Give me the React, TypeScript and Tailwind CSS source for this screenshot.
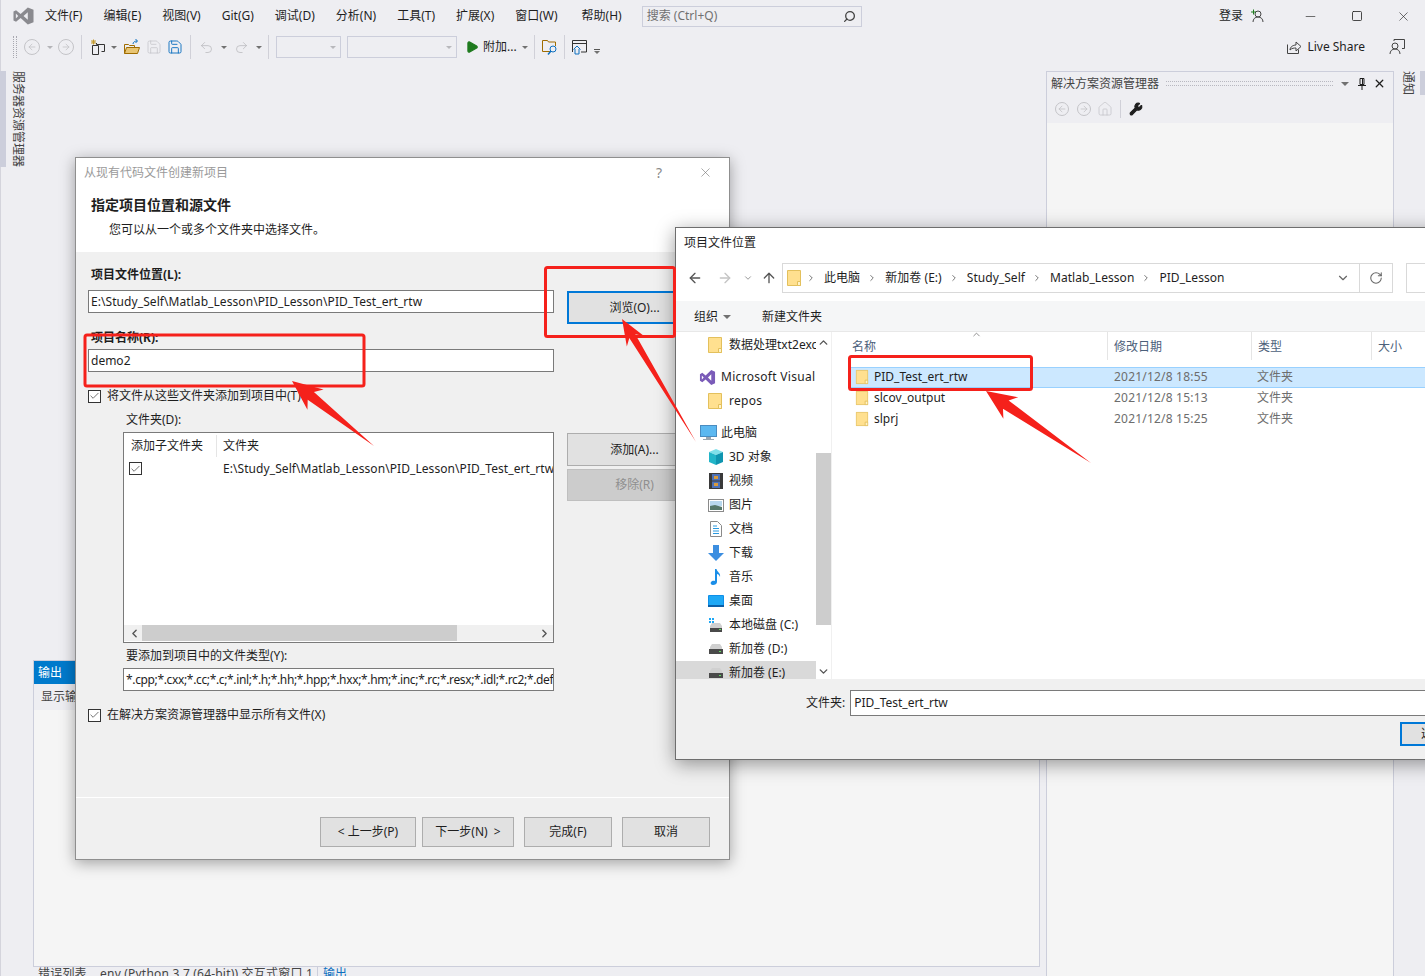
import type { ReactNode } from "react"
import {
  ArrowLeft,
  ArrowRight,
  ArrowUp,
  Check,
  ChevronDown,
  ChevronLeft,
  ChevronRight,
  ChevronUp,
  Home,
  Minus,
  Play,
  RotateCw,
  Save,
  Search,
  Square,
  Undo2,
  Redo2,
  Wrench,
  X,
} from "lucide-react"

const menus = ["文件(F)", "编辑(E)", "视图(V)", "Git(G)", "调试(D)", "分析(N)", "工具(T)", "扩展(X)", "窗口(W)", "帮助(H)"]

function Caret({ className = "" }: { className?: string }) {
  return <span className={`block h-0 w-0 border-x-[3px] border-t-[3px] border-x-transparent border-t-[#717171] ${className}`} />
}

function Divider({ className = "" }: { className?: string }) {
  return <span className={`block h-[24px] w-px bg-[#d0d0d8] ${className}`} />
}

function VsLogo() {
  return (
    <svg viewBox="0 0 22 18" className="h-[18px] w-[21px]" fill="#8a8a8f" fillRule="evenodd">
      <path d="M15.5 0 21.5 2.4V15.6L15.5 18 8 11.2 3.2 15 .5 13.6V4.4L3.2 3 8 6.8ZM15.5 5 11 9l4.5 4ZM3 6.5v5L5.5 9Z" />
    </svg>
  )
}

function CircleArrow({ dir, size = 16 }: { dir: "l" | "r"; size?: number }) {
  return (
    <span className="flex items-center justify-center rounded-full border border-[#c4c4c8] text-[#c4c4c8]" style={{ width: size, height: size }}>
      {dir === "l" ? <ArrowLeft size={10} /> : <ArrowRight size={10} />}
    </span>
  )
}

function Toolbar() {
  return (
    <div className="flex h-[30px] items-center pl-[13px]">
      <span className="h-[22px] w-[4px] border-x border-dotted border-[#a8a8b0]" />
      <span className="ml-[7px]"><CircleArrow dir="l" /></span>
      <Caret className="ml-[7px] border-t-[#b4b4b8]" />
      <span className="ml-[5px]"><CircleArrow dir="r" /></span>
      <Divider className="ml-[7px]" />
      <svg viewBox="0 0 16 16" className="ml-[8px] h-[16px] w-[16px]" fill="none">
        <path d="M6.5 5.5h8v7h-3M2.5 6.5h6v9h-6zM6.5 5.5V4" stroke="#333" />
        <path d="M3.5 0.5v5M1 3h5M1.5 1l4 4M5.5 1l-4 4" stroke="#c49a2c" />
      </svg>
      <Caret className="ml-[5px] border-t-[#444]" />
      <svg viewBox="0 0 16 16" className="ml-[7px] h-[16px] w-[16px]" fill="none">
        <path d="M.5 14.5v-9h4l1 1h5v2" stroke="#a06c00" />
        <path d="M.5 14.5l2-6h13l-2 6z" fill="#e8c574" stroke="#a06c00" />
        <path d="M9 5c0-2 2-3 4-3M11.5 0l2 2-2 2" stroke="#0e70c0" />
      </svg>
      <Save size={16} strokeWidth={1} className="ml-[6px] text-[#c0c0c4]" />
      <Save size={16} strokeWidth={1.4} className="ml-[5px] text-[#0e70c0]" />
      <Divider className="ml-[7px]" />
      <Undo2 size={15} strokeWidth={1.2} className="ml-[8px] text-[#b8b8bc]" />
      <Caret className="ml-[7px]" />
      <Redo2 size={15} strokeWidth={1.2} className="ml-[7px] text-[#b8b8bc]" />
      <Caret className="ml-[7px]" />
      <Divider className="ml-[6px]" />
      <span className="ml-[7px] flex h-[22px] w-[65px] items-center justify-end border border-[#cccedb] pr-[4px]"><Caret className="border-t-[#b8b8bc]" /></span>
      <span className="ml-[6px] flex h-[22px] w-[110px] items-center justify-end border border-[#cccedb] pr-[4px]"><Caret className="border-t-[#b8b8bc]" /></span>
      <Play size={14} className="ml-[8px] fill-[#1e7a1e] text-[#1e7a1e]" />
      <span className="ml-[4px] w-[36px] whitespace-nowrap text-[12px] text-[#1e1e1e]">附加...</span>
      <Caret className="ml-[3px] border-t-[#444]" />
      <Divider className="ml-[6px]" />
      <svg viewBox="0 0 16 16" className="ml-[7px] h-[16px] w-[16px]" fill="none">
        <path d="M.5 12.5v-11h5l1 1.500h7v4" stroke="#a06c00" />
        <path d="M.5 12.5H8" stroke="#a06c00" />
        <circle cx="11" cy="10" r="3" stroke="#0e70c0" />
        <path d="M9 12l-3 3.500" stroke="#0e70c0" strokeWidth="1.500" />
      </svg>
      <Divider className="ml-[6px]" />
      <svg viewBox="0 0 16 16" className="ml-[7px] h-[16px] w-[16px]" fill="none">
        <path d="M.5 13V1.500h14V13H9M.5 4.500h14" stroke="#333" />
        <path d="M1.500 10.500 5 7l3.500 3.500M3 10v5h4v-5" stroke="#0e70c0" />
      </svg>
      <span className="ml-[6px] mt-[8px] flex flex-col items-center gap-[1px]">
        <span className="block h-px w-[6px] bg-[#555]" />
        <Caret className="border-t-[#555]" />
      </span>
    </div>
  )
}

function TopBar() {
  return (
    <div className="flex h-[32px] items-center text-[12px] text-[#1e1e1e]">
      <span className="ml-[13px]"><VsLogo /></span>
      <nav className="ml-[11px] flex gap-[21px]">
        {menus.map((m) => (
          <span key={m} className="last:ml-[3px]">{m}</span>
        ))}
      </nav>
      <div className="ml-[20px] flex h-[21px] w-[220px] items-center justify-between border border-[#cccedb] pl-[4px] pr-[5px] text-[#717171]">
        搜索 (Ctrl+Q)
        <Search size={13} strokeWidth={2.4} className="-scale-x-100 text-[#424242]" />
      </div>
      <span className="ml-auto">登录</span>
      <svg viewBox="0 0 14 14" className="ml-[7px] h-[14px] w-[14px]" fill="none">
        <circle cx="8" cy="5" r="3" stroke="#444" />
        <path d="M3 13c0-3 2-5 5-5s5 2 5 5" stroke="#444" />
        <path d="M1 3h5M3.500 .5v5" stroke="#1e7a1e" />
      </svg>
      <Minus size={15} strokeWidth={1} className="ml-[39px] text-[#1e1e1e]" />
      <Square size={12} strokeWidth={1.6} className="ml-[33px] text-[#1e1e1e]" />
      <X size={15} strokeWidth={1} className="ml-[33px] mr-[14px] text-[#1e1e1e]" />
    </div>
  )
}

function SolutionPanel() {
  return (
    <section className="flex h-full w-[348px] flex-col border-x border-t border-[#cccedb]">
      <div className="flex h-[23px] items-center pl-[4px] text-[12px] text-[#444]">
        解决方案资源管理器
        <span className="ml-[7px] h-[5px] w-[167px] border-y border-dotted border-[#b8b8c0]" />
        <Caret className="ml-[8px] border-x-[4px] border-t-[4px] border-t-[#1e1e1e]" />
        <svg viewBox="0 0 12 12" className="ml-[7px] h-[12px] w-[12px]" fill="none" stroke="#1e1e1e">
          <path d="M4 .5h4v6H4zM6.500 1v5M2 7.500h8M6 8v4" />
        </svg>
        <X size={13} strokeWidth={2.4} className="ml-[5px] text-[#1e1e1e]" />
      </div>
      <div className="flex h-[28px] items-center pb-px pl-[8px]">
        <CircleArrow dir="l" size={14} />
        <span className="ml-[8px]"><CircleArrow dir="r" size={14} /></span>
        <Home size={16} strokeWidth={1} className="ml-[6px] text-[#c0c0c4]" />
        <span className="ml-[7px] h-[18px] w-px bg-[#d0d0d8]" />
        <Wrench size={14} className="ml-[8px] fill-[#1e1e1e] text-[#1e1e1e]" />
      </div>
      <div className="flex-1 bg-[#f5f5f5]" />
    </section>
  )
}

function OutputPanel() {
  return (
    <>
      <section className="flex h-[307px] flex-col border border-[#cccedb] bg-[#f5f5f5]">
        <div className="flex h-[23px] items-center bg-[#007acc] pl-[4px] text-[12px] text-white">输出</div>
        <div className="flex h-[26px] items-center bg-[#eeeef2] pl-[7px] text-[12px] text-[#444]">显示输出来源(S):</div>
      </section>
      <div className="flex h-[9px] overflow-hidden text-[12px] leading-[14px] text-[#444]">
        <span className="w-[285px] whitespace-nowrap border-r border-[#cccedb] pl-[5px] tracking-[0.2px]">错误列表 &nbsp;&nbsp; env (Python 3.7 (64-bit)) 交互式窗口 1</span>
        <span className="ml-[5px] text-[#0e70c0]">输出</span>
      </div>
    </>
  )
}

function Checkbox() {
  return (
    <span className="flex h-[13px] w-[13px] shrink-0 items-center justify-center border border-[#333] bg-white">
      <Check size={12} strokeWidth={1.5} className="text-[#333]" />
    </span>
  )
}

function WizButton({ w, children, className = "" }: { w: string; children: ReactNode; className?: string }) {
  return <button className={`flex h-[30px] items-center justify-center border border-[#adadad] bg-[#e1e1e1] text-[12px] text-[#1e1e1e] ${w} ${className}`}>{children}</button>
}

function WizardDialog() {
  return (
    <div className="absolute left-[75px] top-[157px] flex h-[703px] w-[655px] flex-col border border-[#8f8f8f] bg-[#f0f0f0] text-[12px] text-[#1e1e1e] shadow-[0_3px_14px_rgba(0,0,0,0.35)]">
      <header className="h-[94px] bg-white">
        <div className="flex h-[29px] items-center pl-[8px] text-[#9a9a9a]">
          从现有代码文件创建新项目
          <span className="ml-auto text-[14px] text-[#8a8a8a]">?</span>
          <X size={15} strokeWidth={1} className="ml-[36px] mr-[16px] text-[#777]" />
        </div>
        <h1 className="ml-[15px] mt-[9px] text-[14px] font-bold leading-[18px]">指定项目位置和源文件</h1>
        <p className="ml-[33px] mt-[7px] leading-[18px]">您可以从一个或多个文件夹中选择文件。</p>
      </header>
      <div className="flex-1 pl-[12px] pt-[14px]">
        <label className="ml-[3px] block font-bold leading-[18px]">项目文件位置(L):</label>
        <div className="mt-[6px] flex h-[23px] items-start">
          <div className="flex h-[23px] w-[466px] items-center border border-[#7a7a7a] bg-white pl-[2px] tracking-[0.07px]">E:\Study_Self\Matlab_Lesson\PID_Lesson\PID_Test_ert_rtw</div>
          <button className="ml-[13px] mt-[1px] h-[33px] w-[135px] shrink-0 border-2 border-[#0078d7] bg-[#e1e1e1]">浏览(O)...</button>
        </div>
        <label className="ml-[3px] mt-[16px] block font-bold leading-[18px]">项目名称(R):</label>
        <div className="mt-[2px] flex h-[23px] w-[466px] items-center border border-[#7a7a7a] bg-white pl-[2px]">demo2</div>
        <div className="mt-[15px] flex h-[18px] items-center gap-[6px]">
          <Checkbox />
          将文件从这些文件夹添加到项目中(T)
        </div>
        <label className="ml-[38px] mt-[6px] block leading-[18px]">文件夹(D):</label>
        <div className="ml-[35px] mt-[3px] flex items-start">
          <div className="flex h-[211px] w-[431px] flex-col border border-[#7a7a7a] bg-white">
            <div className="flex h-[24px] items-center pt-[2px]">
              <span className="w-[92px] pl-[7px]">添加子文件夹</span>
              <span className="h-full w-px bg-[#e5e5e5]" />
              <span className="pl-[6px]">文件夹</span>
            </div>
            <div className="flex h-[23px] items-center">
              <span className="flex w-[99px] pl-[5px]"><Checkbox /></span>
              <span className="w-[330px] overflow-hidden whitespace-nowrap tracking-[0.07px]">E:\Study_Self\Matlab_Lesson\PID_Lesson\PID_Test_ert_rtw</span>
            </div>
            <div className="mb-px mt-auto flex h-[16px] items-center bg-[#f0f0f0]">
              <ChevronLeft size={13} strokeWidth={2.6} className="ml-[3px] w-[15px] text-[#555]" />
              <span className="h-full w-[315px] bg-[#cdcdcd]" />
              <ChevronRight size={13} strokeWidth={2.6} className="ml-auto mr-[2px] text-[#555]" />
            </div>
          </div>
          <div className="ml-[13px] mt-px flex flex-col gap-[3px]">
            <button className="h-[33px] w-[135px] border border-[#adadad] bg-[#e1e1e1]">添加(A)...</button>
            <button className="h-[32px] w-[135px] border border-[#bfbfbf] bg-[#cccccc] text-[#8f8f8f]">移除(R)</button>
          </div>
        </div>
        <label className="ml-[38px] mt-[4px] block leading-[18px]">要添加到项目中的文件类型(Y):</label>
        <div className="ml-[35px] mt-[3px] flex h-[23px] w-[431px] items-center overflow-hidden whitespace-nowrap border border-[#7a7a7a] bg-white pl-[2px] tracking-[-0.35px]">*.cpp;*.cxx;*.cc;*.c;*.inl;*.h;*.hh;*.hpp;*.hxx;*.hm;*.inc;*.rc;*.resx;*.idl;*.rc2;*.def;*.odl;*.asm</div>
        <div className="mt-[15px] flex h-[18px] items-center gap-[6px]">
          <Checkbox />
          在解决方案资源管理器中显示所有文件(X)
        </div>
      </div>
      <footer className="flex h-[62px] justify-end border-t border-white pr-[19px] pt-[19px]">
        <WizButton w="w-[96px]">&lt; 上一步(P)</WizButton>
        <WizButton w="w-[92px]" className="ml-[6px]">下一步(N) &nbsp;&gt;</WizButton>
        <WizButton w="w-[88px]" className="ml-[10px]">完成(F)</WizButton>
        <WizButton w="w-[88px]" className="ml-[10px]">取消</WizButton>
      </footer>
    </div>
  )
}

function FolderIcon({ className = "" }: { className?: string }) {
  return (
    <svg viewBox="0 0 14 16" className={`h-[16px] w-[14px] shrink-0 ${className}`}>
      <path d="M.5.5h13v15H.5z" fill="#ffe08f" stroke="#e3c05c" />
      <path d="M10.500 11.500h3v4h-3z" fill="#fff3c9" stroke="#e3c05c" />
    </svg>
  )
}

const icons: Record<string, ReactNode> = {
  vs: (
    <svg viewBox="0 0 18 18" className="h-[17px] w-[17px]">
      <path d="M13 1l4 2v12l-4 2-6-6-3.500 3L1 12.500v-7L3.500 4 7 7zM13 5.500 9.500 9l3.500 3.500zM3 7v4l2-2z" fill="#7a5bb8" fillRule="evenodd" />
    </svg>
  ),
  pc: (
    <svg viewBox="0 0 17 16" className="h-[16px] w-[17px]">
      <rect x=".5" y=".5" width="16" height="11" fill="#5cb8f0" stroke="#4a8cc0" />
      <path d="M6 12h5v2H6zM3 14h11v1H3z" fill="#9aa6b0" />
    </svg>
  ),
  cube: (
    <svg viewBox="0 0 16 16" className="h-[16px] w-[16px]">
      <path d="M8 0 15 3 8 6 1 3z" fill="#7fe0ea" />
      <path d="M1 3l7 3v10l-7-3z" fill="#22b5c8" />
      <path d="M15 3 8 6v10l7-3z" fill="#0f95b0" />
    </svg>
  ),
  video: (
    <svg viewBox="0 0 14 16" className="ml-px h-[16px] w-[14px]">
      <rect width="14" height="16" fill="#3a3a3a" />
      <rect x="3" y="1" width="8" height="6.500" fill="#4d72b8" />
      <rect x="3" y="8.500" width="8" height="6.500" fill="#4d72b8" />
      <rect x="5" y="3" width="4" height="3" fill="#d89a3c" />
      <rect x="5" y="10" width="4" height="3" fill="#d89a3c" />
    </svg>
  ),
  image: (
    <svg viewBox="0 0 16 13" className="h-[13px] w-[16px]">
      <rect x=".5" y=".5" width="15" height="12" fill="#fff" stroke="#8a8a8a" />
      <rect x="2" y="2" width="12" height="5" fill="#b8d8ee" />
      <path d="M2 7l5-1 7 2v3H2z" fill="#55786a" />
    </svg>
  ),
  doc: (
    <svg viewBox="0 0 12 16" className="ml-[2px] h-[16px] w-[12px]" fill="none">
      <path d="M.5.5h7l4 4v11H.5z" fill="#fff" stroke="#8a8a8a" />
      <path d="M3 5h4M3 7.500h6M3 10h6M3 12.500h6" stroke="#2b9ae0" />
    </svg>
  ),
  down: (
    <svg viewBox="0 0 16 16" className="h-[16px] w-[16px]">
      <path d="M5 0h6v8h5l-8 8-8-8h5z" fill="#3c8ee0" />
    </svg>
  ),
  music: (
    <svg viewBox="0 0 12 16" className="ml-[2px] h-[16px] w-[12px]">
      <path d="M5 0h1.500c.5 3 4.500 4 3.500 8-.5-2-2-3-3-3v8c0 2-2 3-4 3S0 14.500 1 13s3-1.500 4-1z" fill="#1a8ee8" />
    </svg>
  ),
  desk: (
    <svg viewBox="0 0 16 12" className="h-[12px] w-[16px]">
      <rect width="16" height="12" rx="1" fill="#0f8fe8" />
      <rect x="1" y="1" width="14" height="9" fill="#1ea8f5" />
      <path d="M0 10h16v2H0z" fill="#0a5fa8" />
    </svg>
  ),
  c: (
    <svg viewBox="0 0 16 16" className="h-[16px] w-[16px]">
      <path d="M1 1h2v2H1zM4 1h2v2H4zM1 4h2v2H1zM4 4h2v2H4z" fill="#1ea8f5" />
      <path d="M2 9l2-3h8l2 3v5H2z" fill="#d0d0d0" />
      <rect x="2" y="11" width="12" height="4" fill="#4a4a4a" />
      <rect x="11" y="12" width="2" height="1" fill="#5fe05f" />
    </svg>
  ),
  disk: (
    <svg viewBox="0 0 16 12" className="h-[12px] w-[16px]">
      <path d="M2 4l2-3h8l2 3v2H2z" fill="#d0d0d0" />
      <rect x="1" y="6" width="14" height="5" fill="#4a4a4a" />
      <rect x="11" y="8" width="2" height="1" fill="#5fe05f" />
    </svg>
  ),
}

const navItems = [
  { k: "cube", t: "3D 对象" },
  { k: "video", t: "视频" },
  { k: "image", t: "图片" },
  { k: "doc", t: "文档" },
  { k: "down", t: "下载" },
  { k: "music", t: "音乐" },
  { k: "desk", t: "桌面" },
  { k: "c", t: "本地磁盘 (C:)" },
  { k: "disk", t: "新加卷 (D:)" },
  { k: "disk", t: "新加卷 (E:)" },
]

function NavPane() {
  return (
    <div className="h-full w-[140px] shrink-0 overflow-hidden pt-px">
      <div className="flex h-[24px] items-center whitespace-nowrap pl-[32px]">
        <FolderIcon />
        <span className="ml-[7px]">数据处理txt2exc</span>
      </div>
      <div className="mt-[8px] flex h-[24px] items-center whitespace-nowrap pl-[23px]">
        {icons.vs}
        <span className="ml-[5px] tracking-[0.3px]">Microsoft Visual</span>
      </div>
      <div className="flex h-[24px] items-center pl-[32px]">
        <FolderIcon />
        <span className="ml-[7px] tracking-[0.3px]">repos</span>
      </div>
      <div className="mt-[8px] flex h-[24px] items-center pl-[24px]">
        {icons.pc}
        <span className="ml-[4px]">此电脑</span>
      </div>
      {navItems.map((n, i) => (
        <div key={n.t} className={`flex h-[24px] items-center pl-[32px] ${i === navItems.length - 1 ? "bg-[#d9d9d9]" : ""}`}>
          <span className="flex w-[16px] justify-start">{icons[n.k]}</span>
          <span className="ml-[5px]">{n.t}</span>
        </div>
      ))}
    </div>
  )
}

function NavScrollbar() {
  return (
    <div className="flex h-full w-[15px] shrink-0 flex-col items-center bg-[#f0f0f0]">
      <div className="flex h-[121px] w-full justify-center bg-white pt-[4px]">
        <ChevronUp size={13} strokeWidth={2.6} className="text-[#555]" />
      </div>
      <span className="h-[172px] w-full bg-[#cdcdcd]" />
      <div className="flex h-[54px] w-full items-end justify-center bg-white pb-[1px]">
        <ChevronDown size={13} strokeWidth={2.6} className="text-[#555]" />
      </div>
    </div>
  )
}

const files = [
  { n: "PID_Test_ert_rtw", d: "2021/12/8 18:55", on: true },
  { n: "slcov_output", d: "2021/12/8 15:13", on: false },
  { n: "slprj", d: "2021/12/8 15:25", on: false },
]

function FileList() {
  return (
    <div className="min-w-0 flex-1 border-l border-[#f0f0f0]">
      <div className="relative flex h-[35px] pl-[20px] text-[#4c607a]">
        <ChevronUp size={11} className="absolute left-[139px] top-[-3px] text-[#888]" />
        <span className="flex h-[28px] w-[255px] items-end pb-[4px]">名称</span>
        <span className="flex h-[28px] w-[144px] items-end border-l border-[#e5e5e5] pb-[4px] pl-[6px]">修改日期</span>
        <span className="flex h-[28px] w-[120px] items-end border-l border-[#e5e5e5] pb-[4px] pl-[6px]">类型</span>
        <span className="flex h-[28px] w-[60px] items-end border-l border-[#e5e5e5] pb-[4px] pl-[6px]">大小</span>
      </div>
      <div className="ml-[18px]">
        {files.map((f) => (
          <div key={f.n} className={`flex h-[21px] items-center border-y pb-[2px] pl-[5px] ${f.on ? "border-[#99d1ff] bg-[#cce8ff]" : "border-transparent"}`}>
            <FolderIcon className="scale-90" />
            <span className="ml-[4px] w-[240px] pl-px">{f.n}</span>
            <span className="w-[144px] pl-px tracking-[0.2px] text-[#6d6d6d]">{f.d}</span>
            <span className="text-[#6d6d6d]">文件夹</span>
          </div>
        ))}
      </div>
    </div>
  )
}

function FileDialog() {
  const crumbs = ["此电脑", "新加卷 (E:)", "Study_Self", "Matlab_Lesson", "PID_Lesson"]
  return (
    <div className="absolute left-[675px] top-[227px] flex h-[533px] w-[800px] flex-col border border-[#6e6e6e] bg-white text-[12px] text-[#1e1e1e] shadow-[0_4px_18px_rgba(0,0,0,0.4)]">
      <div className="flex h-[29px] items-center pl-[8px]">项目文件位置</div>
      <div className="flex h-[44px] items-start pt-[6px]">
        <div className="flex h-[30px] w-[106px] shrink-0 items-center">
          <ArrowLeft size={16} className="ml-[11px] text-[#555]" />
          <ArrowRight size={16} className="ml-[14px] text-[#c4c4c4]" />
          <ChevronDown size={10} strokeWidth={2.4} className="ml-[10px] text-[#999]" />
          <ArrowUp size={16} className="ml-[8px] text-[#555]" />
        </div>
        <div className="flex h-[30px] w-[611px] shrink-0 items-center border border-[#d9d9d9] pl-[4px] tracking-[0.05px]">
          <FolderIcon className="mr-[-2px]" />
          {crumbs.map((c) => (
            <span key={c} className="flex items-center">
              <ChevronRight size={10} strokeWidth={2.4} className="ml-[7px] mr-[8px] text-[#777]" />
              {c}
            </span>
          ))}
          <ChevronDown size={14} strokeWidth={2} className="ml-auto mr-[9px] text-[#666]" />
          <span className="flex h-full w-[33px] items-center justify-center border-l border-[#d9d9d9]">
            <RotateCw size={14} strokeWidth={1.8} className="text-[#666]" />
          </span>
        </div>
        <div className="ml-[13px] h-[30px] w-[60px] shrink-0 border border-[#d9d9d9]" />
      </div>
      <div className="flex h-[31px] items-center border-b border-[#e8e8e8] bg-[#f5f6f7] pl-[18px] pt-[2px]">
        组织
        <Caret className="ml-[5px] border-x-[4px] border-t-[4px] border-t-[#333]" />
        <span className="ml-[31px]">新建文件夹</span>
      </div>
      <div className="flex h-[347px]">
        <NavPane />
        <NavScrollbar />
        <FileList />
      </div>
      <div className="relative flex-1 bg-[#f0f0f0] pt-[11px]">
        <div className="flex h-[26px] items-center pl-[130px]">
          文件夹:
          <div className="ml-[5px] flex h-[26px] flex-1 items-center border border-[#7a7a7a] bg-white pl-[3px]">PID_Test_ert_rtw</div>
        </div>
        <button className="absolute left-[724px] top-[43px] h-[24px] w-[74px] overflow-hidden whitespace-nowrap border-2 border-[#0078d7] bg-[#e1e1e1] pl-[19px] text-left">选择文件夹</button>
      </div>
    </div>
  )
}

function arrow(tip: [number, number], tail: [number, number], barb = 13, neck = 5, back = 30, neckBack = 24) {
  const dx = tail[0] - tip[0]
  const dy = tail[1] - tip[1]
  const len = Math.hypot(dx, dy)
  const ux = dx / len
  const uy = dy / len
  const nx = -uy
  const ny = ux
  const p = (b: number, s: number) => `${tip[0] + ux * b + nx * s},${tip[1] + uy * b + ny * s}`
  return [`${tip[0]},${tip[1]}`, p(back, barb), p(neckBack, neck), `${tail[0]},${tail[1]}`, p(neckBack, -neck), p(back, -barb)].join(" ")
}

function Annotations() {
  const red = "#f5211b"
  return (
    <svg className="pointer-events-none absolute left-0 top-0 h-[976px] w-[1425px]" viewBox="0 0 1425 976">
      <rect x="545.500" y="267.500" width="129" height="69" rx="2" fill="none" stroke={red} strokeWidth="3" />
      <rect x="85" y="335" width="279" height="51" rx="2" fill="none" stroke={red} strokeWidth="3" />
      <rect x="849.500" y="356.500" width="182" height="33" rx="2" fill="none" stroke={red} strokeWidth="3" />
      <polygon points={arrow([292, 381], [374, 446])} fill={red} />
      <polygon points={arrow([622, 319], [696, 442], 10, 3.500, 26, 20)} fill={red} />
      <polygon points={arrow([986, 391], [1091, 463])} fill={red} />
    </svg>
  )
}

export default function App() {
  return (
    <div className="relative h-[976px] w-[1425px] overflow-hidden bg-[#eeeef2] shadow-[inset_1px_0_0_#d4d4dc] [font-family:'Noto_Sans','Noto_Sans_CJK_SC',sans-serif]">
      <TopBar />
      <div className="flex h-[32px] items-start">
        <div className="flex-1"><Toolbar /></div>
        <div className="mr-[20px] mt-[6px] flex items-center text-[12px] text-[#1e1e1e]">
          <svg viewBox="0 0 14 14" className="mr-[6px] h-[14px] w-[14px]" fill="none">
            <path d="M.5 4.500v9h11v-4" stroke="#444" />
            <path d="M3 10c0-3 3-5 6-5V2l5 4.500-5 4.500V8c-2 0-4 0-6 2z" stroke="#444" />
          </svg>
          Live Share
          <svg viewBox="0 0 16 16" className="ml-[24px] h-[16px] w-[16px]" fill="none">
            <path d="M5 2V.5h10.500v9H13" stroke="#444" />
            <circle cx="6" cy="7" r="3" stroke="#444" />
            <path d="M1 15c0-3 2-5 5-5s5 2 5 5" stroke="#444" />
          </svg>
        </div>
      </div>
      <div className="flex h-[912px] pt-[7px]">
        <div className="flex w-[33px] items-start">
          <span className="h-[96px] w-[6px] bg-[#cccedb]" />
          <span className="ml-[6px] whitespace-nowrap text-[12px] leading-[12px] text-[#444] [text-orientation:sideways] [writing-mode:vertical-rl]">服务器资源管理器</span>
        </div>
        <div className="flex w-[1007px] flex-col justify-end">
          <OutputPanel />
        </div>
        <div className="ml-[6px]"><SolutionPanel /></div>
        <div className="flex flex-1 items-start justify-end">
          <span className="mr-[6px] whitespace-nowrap text-[12px] leading-[12px] text-[#444] [text-orientation:sideways] [writing-mode:vertical-rl]">通知</span>
          <span className="h-[24px] w-[5px] bg-[#cccedb]" />
        </div>
      </div>
      <WizardDialog />
      <FileDialog />
      <Annotations />
    </div>
  )
}
